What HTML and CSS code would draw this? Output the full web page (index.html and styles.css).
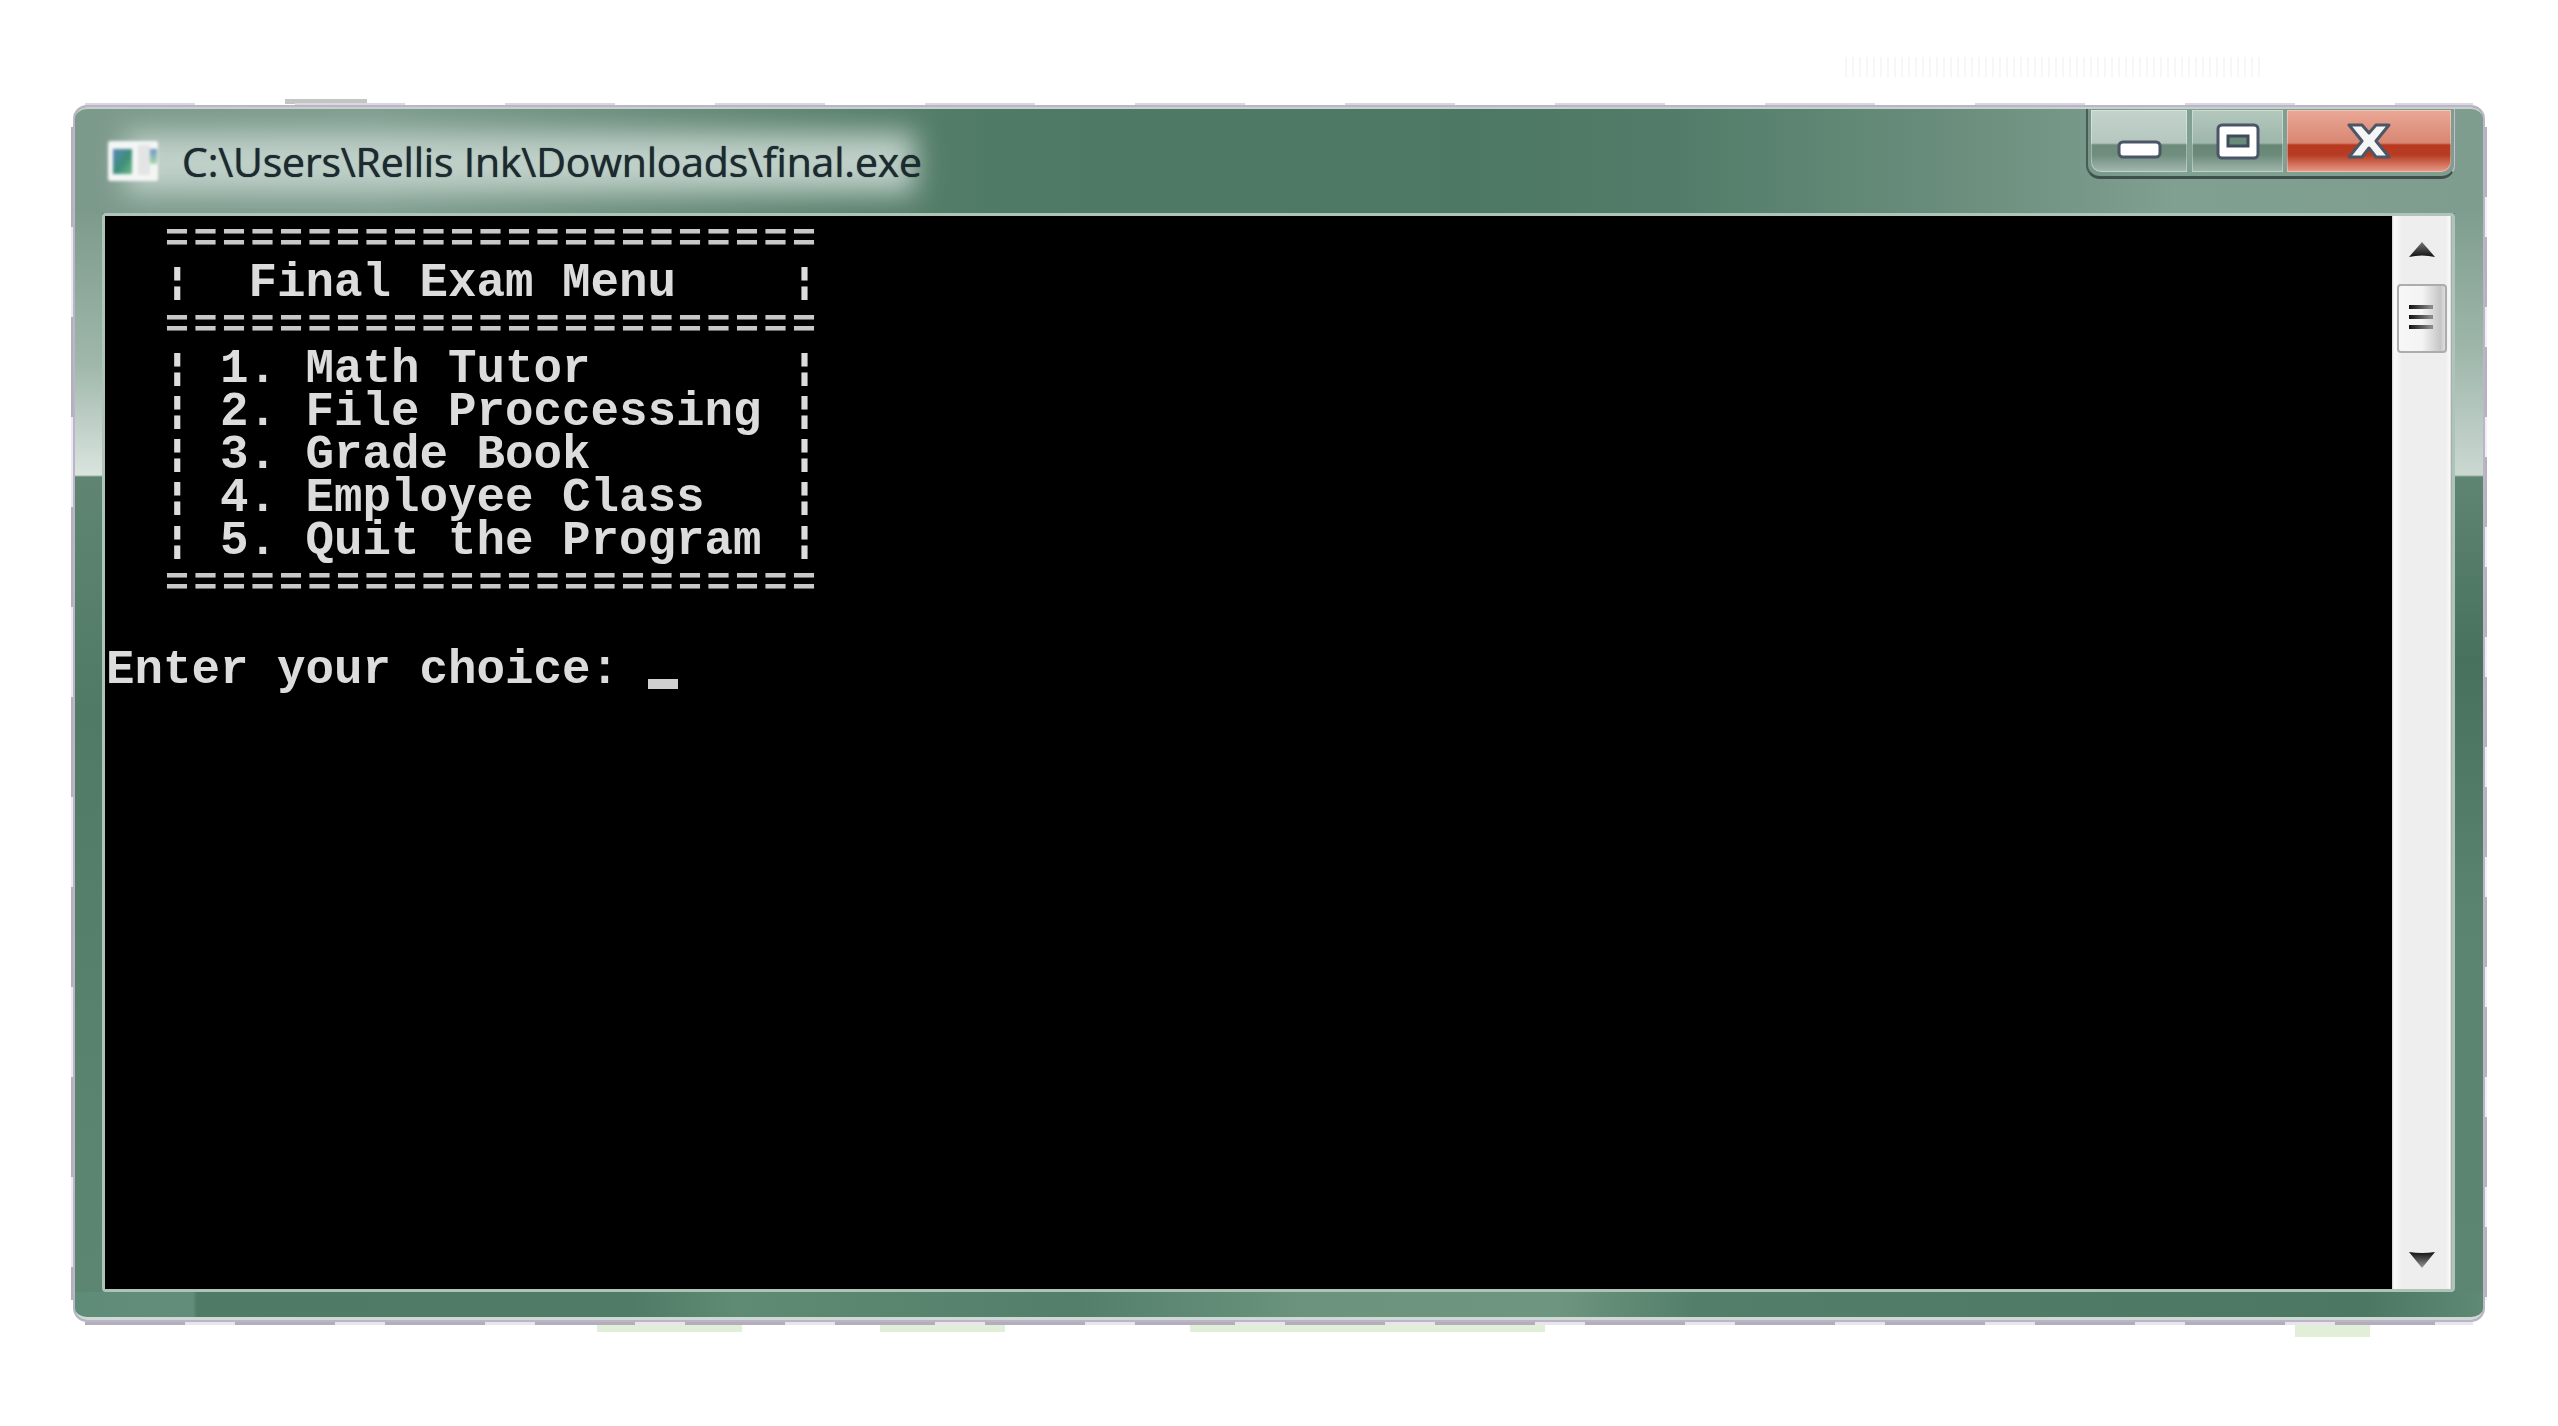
FILE: index.html
```html
<!DOCTYPE html>
<html lang="en">
<head>
<meta charset="utf-8">
<title>final.exe</title>
<link rel="stylesheet" href="styles.css">
</head>
<body>
<main class="window">
  <header class="titlebar">
    <svg class="app-icon" width="50" height="40" viewBox="0 0 50 40">
      <defs>
        <linearGradient id="pane" x1="0" y1="0" x2="1" y2="1"><stop offset="0" stop-color="#5b86b8"/><stop offset=".55" stop-color="#3d8f78"/><stop offset="1" stop-color="#6fb98a"/></linearGradient>
        <linearGradient id="pane2" x1="0" y1="0" x2="0" y2="1"><stop offset="0" stop-color="#6f96c4"/><stop offset="1" stop-color="#a9d9a8"/></linearGradient>
      </defs>
      <rect width="50" height="40" rx="2" fill="#f4f6f5"/>
      <rect x="30" y="4" width="12" height="30" fill="#e2e5e3"/>
      <rect x="5" y="8" width="19" height="25" fill="url(#pane)"/>
      <rect x="42" y="8" width="7" height="15" fill="url(#pane2)"/>
    </svg>
    <h1 class="title">C:\Users\Rellis Ink\Downloads\final.exe</h1>
    <div class="controls">
      <div class="ctl ctl-min">
        <svg width="45" height="19" viewBox="0 0 45 19"><rect x="2" y="2" width="41" height="15" rx="4" fill="#fff" stroke="#4a5568" stroke-width="3"/></svg>
      </div>
      <div class="ctl ctl-max">
        <svg width="44" height="37" viewBox="0 0 44 37"><rect x="2" y="2" width="40" height="33" rx="4" fill="#fff" stroke="#4a5568" stroke-width="3"/><rect x="12" y="13" width="20" height="10" fill="#6a8a7c" stroke="#3f4c5c" stroke-width="3"/></svg>
      </div>
      <div class="ctl ctl-close">
        <svg width="44" height="38" viewBox="0 0 44 38"><path d="M2 3h13l7 8 7-8h13L29 19l13 16H29l-7-9-7 9H2l13-16z" fill="#f4f6f6" stroke="#4c5666" stroke-width="3" stroke-linejoin="round"/></svg>
      </div>
    </div>
  </header>
  <div class="middle">
    <div class="frame frame-left"></div>
    <div class="client">
      <pre class="console">  <span class="rule">=======================</span>
  <span class="bar">¦</span>  Final Exam Menu    <span class="bar">¦</span>
  <span class="rule">=======================</span>
  <span class="bar">¦</span> 1. Math Tutor       <span class="bar">¦</span>
  <span class="bar">¦</span> 2. File Proccessing <span class="bar">¦</span>
  <span class="bar">¦</span> 3. Grade Book       <span class="bar">¦</span>
  <span class="bar">¦</span> 4. Employee Class   <span class="bar">¦</span>
  <span class="bar">¦</span> 5. Quit the Program <span class="bar">¦</span>
  <span class="rule">=======================</span>

Enter your choice: <span class="cursor"></span></pre>
      <div class="scrollbar">
        <svg class="arrow arrow-up" width="26" height="17" viewBox="0 0 26 17">
          <defs><linearGradient id="au" x1="0" y1="0" x2="0" y2="1"><stop offset="0" stop-color="#777"/><stop offset="1" stop-color="#111"/></linearGradient></defs>
          <path d="M13 0L26 15Q13 12 0 15z" fill="url(#au)"/>
        </svg>
        <div class="thumb">
          <span class="grip"></span><span class="grip"></span><span class="grip"></span>
        </div>
        <div class="track"></div>
        <svg class="arrow arrow-down" width="26" height="17" viewBox="0 0 26 17">
          <defs><linearGradient id="ad" x1="0" y1="0" x2="0" y2="1"><stop offset="0" stop-color="#111"/><stop offset="1" stop-color="#999"/></linearGradient></defs>
          <path d="M0 1Q13 3 26 1L13 17z" fill="url(#ad)"/>
        </svg>
      </div>
    </div>
    <div class="frame frame-right"></div>
  </div>
  <footer class="bottom"></footer>
  <span class="scrap scrap-g1"></span>
  <span class="scrap scrap-g2"></span>
  <span class="scrap scrap-g3"></span>
  <span class="scrap scrap-g4"></span>
  <span class="scrap scrap-top"></span>
  <span class="scrap scrap-noise"></span>
  <span class="scrap scrap-line-top"></span>
  <span class="scrap scrap-line-bottom"></span>
  <span class="scrap scrap-line-left"></span>
  <span class="scrap scrap-line-right"></span>
</main>
</body>
</html>
```
FILE: styles.css
```css
html, body {
  margin: 0;
  height: 100%;
  background: #fff;
  overflow: hidden;
}
body {
  padding: 105px 0 0 73px;
  box-sizing: border-box;
}
.window {
  position: relative;
  box-sizing: border-box;
  width: 2412px;
  height: 1217px;
  border: 2px solid #bcb4c8;
  border-radius: 14px;
  display: flex;
  flex-direction: column;
  background: #5c8571;
}
.titlebar {
  position: relative;
  height: 106px;
  flex: none;
  display: flex;
  align-items: center;
  padding: 0 28px 0 33px;
  box-sizing: border-box;
  border-radius: 12px 12px 0 0;
  border-top: 2px solid #c4d2cb;
  overflow: hidden;
  background: linear-gradient(90deg, #7c9a8c 0, #7f9d8f 300px, #628774 680px, #4f7a65 920px, #4d7863 1400px, #527c69 1600px, #6c8f7e 1900px, #80a091 2100px, #7e9d8f 2410px);
}
.titlebar::before {
  content: "";
  position: absolute;
  left: 50px;
  width: 790px;
  top: 24px;
  bottom: 20px;
  background: #bfd0c8;
  filter: blur(14px);
}
.app-icon {
  position: relative;
  flex: none;
  filter: blur(1.5px);
  margin-right: 24px;
}
.title {
  position: relative;
  margin: 0;
  font: 400 41px/50px "Open Sans", "Liberation Sans", sans-serif;
  letter-spacing: -.2px;
  color: #1d2a30;
  white-space: nowrap;
  text-shadow: 0 0 1px #1d2a30;
}
.controls {
  position: relative;
  margin-left: auto;
  align-self: flex-start;
  display: flex;
  gap: 4px;
  height: 70px;
  box-sizing: border-box;
  padding: 1px 3px 4px 3px;
  border: 1px solid #c9b9d2;
  border-top: 0;
  border-bottom: 3px solid #3f4f49;
  border-left: 2px solid #4a5c55;
  border-radius: 0 0 14px 14px;
  filter: blur(.5px);
}
.ctl {
  display: flex;
  justify-content: center;
  box-shadow: inset 0 0 0 1px rgba(255,255,255,.35);
  box-sizing: border-box;
  height: 100%;
}
.ctl-min {
  width: 96px;
  padding-top: 30px;
  border-radius: 0 0 0 10px;
  background: linear-gradient(#c4d3cc 0, #b4c7be 33px, #6d8b7b 35px, #6f8e7e 45px, #a4bab0 62px);
}
.ctl-max {
  width: 91px;
  margin-left: 1px;
  padding-top: 13px;
  background: linear-gradient(#b4c8be 0, #9fb6ab 33px, #678676 35px, #6c8b7b 45px, #a1b8ad 62px);
}
.ctl-close {
  width: 164px;
  padding-top: 12px;
  border-radius: 0 0 10px 0;
  background: linear-gradient(#eaa896 0, #d88672 33px, #b8381f 35px, #b63c24 45px, #e89c88 62px);
}
.middle {
  flex: 1;
  display: flex;
  min-height: 0;
}
.frame { flex: none; }
.frame-left {
  width: 27px;
  background: linear-gradient(#7d9b8d 0, #9fb7ab 150px, #dae4df 262px, #5f8572 264px, #507a66 500px, #5a8470 900px, #5c8672 1079px);
}
.frame-right {
  width: 28px;
  background: linear-gradient(#7f9e8f 0, #9fb7ab 140px, #cbd8d2 262px, #5e8572 264px, #47715d 450px, #5a8470 700px, #5c8672 1079px);
}
.client {
  flex: 1;
  min-width: 0;
  display: flex;
  border: 3px solid #aec4b9;
  border-radius: 4px;
  box-shadow: inset 0 0 0 1px #26312c;
}
.console {
  flex: 1;
  min-width: 0;
  margin: 0;
  padding: 3px 0 0 1px;
  background: #000;
  color: #dcdcdc;
  font: 700 47.5px/43px "Liberation Mono", "DejaVu Sans Mono", monospace;
  filter: blur(.7px);
}
.rule {
  font-size: 40px;
  line-height: 0;
  letter-spacing: 4.5px;
  color: #c8c8c8;
  margin-left: 2px;
  margin-right: -2px;
  vertical-align: 2px;
}
.bar {
  display: inline-block;
  width: 28.5px;
  vertical-align: top;
  transform: scaleY(.72);
}
.cursor {
  display: inline-block;
  width: 30px;
  height: 10px;
  background: #d0d0d0;
  vertical-align: -6px;
}
.scrollbar {
  flex: none;
  width: 60px;
  box-sizing: border-box;
  display: flex;
  flex-direction: column;
  align-items: center;
  background: linear-gradient(90deg, #cfcfcf 0, #fafafa 2px, #eeeeee 10px, #eeeeee 54px, #fafafa 58px, #8b9690 60px);
  filter: blur(.4px);
}
.arrow { flex: none; }
.arrow-up { margin-top: 26px; }
.arrow-down { margin-bottom: 21px; }
.thumb {
  flex: none;
  width: 50px;
  height: 69px;
  margin-top: 25px;
  box-sizing: border-box;
  border: 2px solid #a9aeac;
  border-radius: 4px;
  padding: 19px 12px 0 10px;
  display: flex;
  flex-direction: column;
  gap: 6px;
  background: linear-gradient(90deg, #f7f7f7 0, #f4f4f4 50%, #c6c6c6 90%, #dedede 100%);
}
.grip {
  display: block;
  height: 4px;
  background: linear-gradient(90deg, #111, #888 90%);
}
.track { flex: 1; }
.bottom {
  height: 28px;
  flex: none;
  border-bottom: 3px solid #cfdad4;
  box-sizing: border-box;
  border-radius: 0 0 12px 12px;
  background: linear-gradient(90deg, #5f8c78 0, #628d7a 118px, #4f7a65 122px, #507b66 560px, #5f8a74 660px, #537f6a 1000px, #6b937e 1230px, #6e957f 1480px, #537f6a 1620px, #4f7a65 2000px, #4c7763 2290px, #5e8975 2408px);
}
.scrap { position: absolute; display: block; }
.scrap-line-top {
  left: 10px; right: 10px; top: -4px; height: 2px;
  background: repeating-linear-gradient(90deg, #dbd7e0 0 110px, rgba(255,255,255,0) 110px 210px);
}
.scrap-line-bottom {
  left: 10px; right: 10px; bottom: -5px; height: 3px;
  background: repeating-linear-gradient(90deg, #b4aebc 0 100px, #e8e5ec 100px 150px);
}
.scrap-line-left {
  left: -4px; top: 20px; bottom: 20px; width: 2px;
  background: repeating-linear-gradient(#b4b0ba 0 100px, #eceaf0 100px 190px);
}
.scrap-line-right {
  right: -4px; top: 20px; bottom: 20px; width: 2px;
  background: repeating-linear-gradient(#b6b2bc 0 70px, #f1eff4 70px 110px);
}
.scrap-g1, .scrap-g2, .scrap-g3, .scrap-g4 {
  height: 9px;
  bottom: -12px;
  background: #e2efd8;
}
.scrap-g1 { left: 522px; width: 145px; }
.scrap-g2 { left: 805px; width: 125px; }
.scrap-g3 { left: 1115px; width: 355px; }
.scrap-g4 { left: 2220px; width: 75px; height: 14px; bottom: -17px; }
.scrap-top {
  left: 210px; top: -8px; width: 82px; height: 5px;
  background: #c4c4c2;
}
.scrap-noise {
  left: 1770px; top: -50px; width: 420px; height: 20px;
  background: repeating-linear-gradient(90deg, #e4e4e4 0 2px, #fff 2px 7px);
  opacity: .3;
}
```
